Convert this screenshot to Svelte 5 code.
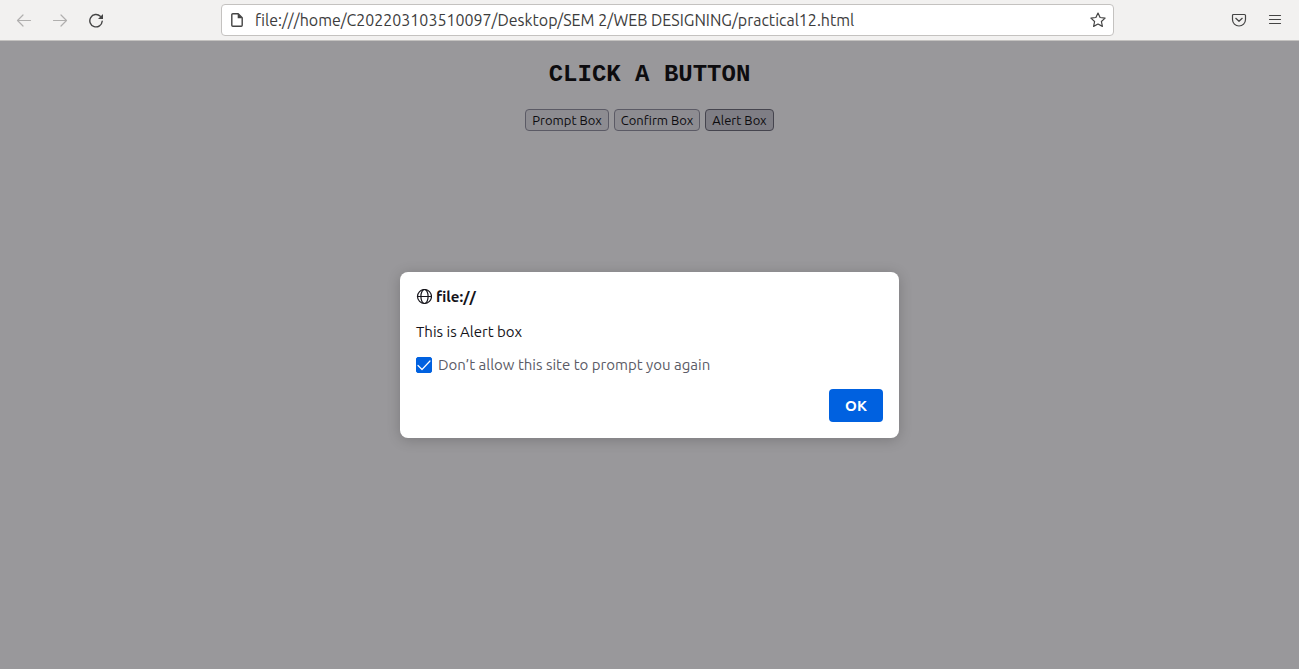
<script>
  let url = $state('file:///home/C202203103510097/Desktop/SEM 2/WEB DESIGNING/practical12.html');
  let muted = $state(true);
  let open = $state(true);
</script>

<div class="browser">
  <header class="toolbar">
    <nav class="tools" aria-label="Navigation">
      <button class="tool" disabled aria-label="Back">
        <svg viewBox="0 0 16 16"><path d="M7 3 1.500 8.500 7 14M1.500 8.500h13" /></svg>
      </button>
      <button class="tool" disabled aria-label="Forward">
        <svg viewBox="0 0 16 16"><path d="M9 3l5.500 5.500L9 14M14.500 8.500h-13" /></svg>
      </button>
      <button class="tool" aria-label="Reload">
        <svg viewBox="0 0 16 16">
          <path class="bold" d="M12.300 4.200A6.200 6.200 0 1 0 14.200 9.200" />
          <path class="solid" d="M15 2v5H10z" />
        </svg>
      </button>
    </nav>
    <div class="address">
      <svg class="page-icon" viewBox="0 0 16 16">
        <path class="bold" d="M3.800 1.700h5.400l4 4v7.600a1 1 0 0 1-1 1H3.800a1 1 0 0 1-1-1V2.700a1 1 0 0 1 1-1z" />
        <path class="solid" d="M8.700 1.500v4.700h4.700z" />
      </svg>
      <input type="text" bind:value={url} aria-label="Address" spellcheck="false" />
      <button class="star" aria-label="Bookmark this page">
        <svg viewBox="0 0 16 16"><path d="M8 1l2.100 4.500 5 .6-3.700 3.400 1 4.900L8 12l-4.400 2.400 1-4.900L.9 6.100l5-.6z" /></svg>
      </button>
    </div>
    <div class="tools">
      <button class="tool" aria-label="Save to Pocket">
        <svg viewBox="0 0 16 16">
          <path d="M2.500 2.500h11a1 1 0 0 1 1 1v4a6.500 6.500 0 0 1-13 0v-4a1 1 0 0 1 1-1z" />
          <path d="M4.800 6.300 8 9.300l3.200-3" />
        </svg>
      </button>
      <button class="tool" aria-label="Menu">
        <svg viewBox="0 0 16 16"><path d="M2.500 3.500h11M2.500 7.500h11M2.500 11.500h11" /></svg>
      </button>
    </div>
  </header>

  <main>
    <h1>CLICK A BUTTON</h1>
    <div class="choices">
      <button>Prompt Box</button>
      <button>Confirm Box</button>
      <button class="active" onclick={() => (open = true)}>Alert Box</button>
    </div>

    {#if open}
      <div class="overlay">
        <div class="dialog" role="alertdialog" aria-modal="true" aria-labelledby="origin" aria-describedby="message">
          <div class="title">
            <svg viewBox="0 0 16 16">
              <circle cx="8.500" cy="7.500" r="7" />
              <ellipse cx="8.500" cy="7.500" rx="3.600" ry="7" />
              <path d="M1.500 7.500h14" />
            </svg>
            <strong id="origin">file://</strong>
          </div>
          <p id="message">This is Alert box</p>
          <label class="mute">
            <input type="checkbox" bind:checked={muted} />
            <svg viewBox="0 0 16 16"><path d="M2 8.500 6 12.500 14 4" /></svg>
            <span>Don’t allow this site to prompt you again</span>
          </label>
          <button class="ok" onclick={() => (open = false)}>OK</button>
        </div>
      </div>
    {/if}
  </main>
</div>

<style>
  :global(body) {
    margin: 0;
  }
  .browser {
    display: flex;
    flex-direction: column;
    min-height: 100vh;
    font-family: Ubuntu, 'Noto Sans', sans-serif;
    font-size: 15px;
    color: #15141a;
  }
  button,
  input {
    font: inherit;
    color: inherit;
    margin: 0;
  }
  svg {
    display: block;
    flex: none;
    width: 16px;
    height: 16px;
    fill: none;
    stroke: currentColor;
    stroke-width: 1.2;
    stroke-linecap: round;
    stroke-linejoin: round;
  }
  .bold {
    stroke-width: 1.4;
  }
  .solid {
    fill: currentColor;
    stroke: none;
  }
  .toolbar {
    display: grid;
    grid-template-columns: auto 109fr minmax(0, 893fr) 109fr auto;
    align-items: center;
    box-sizing: border-box;
    height: 41px;
    padding: 0 8px;
    border-bottom: 1px solid #c4c2c0;
    background: #f2f1f0;
    color: #444;
  }
  .tools {
    display: flex;
    gap: 4px;
  }
  .tools:last-child {
    grid-column: 5;
  }
  .tool,
  .star {
    display: grid;
    place-items: center;
    width: 32px;
    height: 32px;
    padding: 0;
    border: 0;
    background: none;
  }
  .star {
    width: 30px;
  }
  .tool:disabled {
    color: #b0afae;
  }
  .address {
    grid-column: 3;
    display: flex;
    align-items: center;
    gap: 10px;
    box-sizing: border-box;
    height: 32px;
    padding-left: 7px;
    border: 1px solid #c4c2c0;
    border-radius: 4px;
    background: #fff;
  }
  .address input {
    flex: 1;
    min-width: 0;
    padding: 0;
    border: 0;
    outline: 0;
    background: none;
    font-size: 16px;
    color: #3c3c3c;
  }
  main {
    position: relative;
    flex: 1;
    background: #fff;
    text-align: center;
  }
  h1 {
    margin: 0;
    padding: 21px 0;
    font: bold 24px/26px 'Liberation Mono', monospace;
    color: #000;
  }
  .choices {
    display: flex;
    justify-content: center;
    gap: 5px;
    font-size: 13px;
  }
  .choices button {
    box-sizing: border-box;
    height: 22px;
    padding: 0 6px;
    border: 1px solid #8f8f9d;
    border-radius: 4px;
    background: #e9e9ed;
    line-height: 20px;
    color: #000;
  }
  .choices .active {
    background: #d0d0d7;
    border-color: #676774;
  }
  .overlay {
    position: absolute;
    inset: 0;
    display: grid;
    place-items: center;
    background: rgba(28, 27, 34, 0.45);
    text-align: left;
  }
  .dialog {
    display: flex;
    flex-direction: column;
    gap: 15px;
    box-sizing: border-box;
    width: min(499px, 90%);
    padding: 16px;
    border-radius: 8px;
    background: #fff;
    line-height: 18px;
    box-shadow: 0 2px 14px rgba(0, 0, 0, 0.2);
  }
  .title {
    display: flex;
    align-items: center;
    gap: 4px;
    margin-bottom: 2px;
  }
  p {
    margin: 0;
  }
  .mute {
    display: grid;
    grid-template-columns: 16px 1fr;
    align-items: center;
    gap: 6px;
    color: #5b5b66;
  }
  .mute input,
  .mute svg {
    grid-area: 1 / 1;
  }
  .mute input {
    appearance: none;
    width: 16px;
    height: 16px;
    border: 1px solid #8f8f9d;
    border-radius: 2px;
  }
  .mute input:checked {
    border-color: #0061e0;
    background: #0061e0;
  }
  .mute svg {
    color: #fff;
    pointer-events: none;
  }
  .ok {
    align-self: flex-end;
    min-width: 54px;
    height: 33px;
    padding: 0 16px;
    border: 0;
    border-radius: 4px;
    background: #0061e0;
    color: #fff;
    font-weight: 700;
  }
</style>
